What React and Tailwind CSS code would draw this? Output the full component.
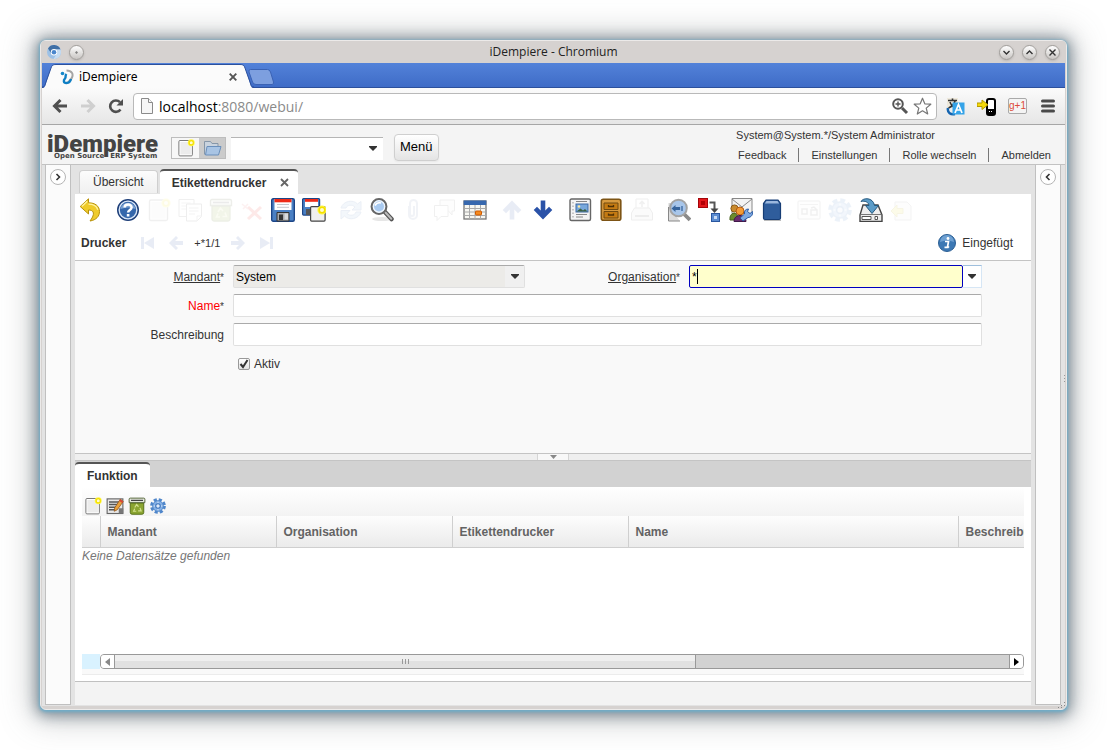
import { useState } from "react";

const ARIAL = "font-['Liberation_Sans',Arial,sans-serif]";

/* ---------- small helpers ---------- */

function Svg({ size = 24, children, className = "" }) {
  return (
    <svg width={size} height={size} viewBox="0 0 24 24" fill="none" className={`block shrink-0 ${className}`} aria-hidden="true">
      {children}
    </svg>
  );
}

function Caret() {
  return (
    <svg width="8" height="5" viewBox="0 0 8 5" className="block" aria-hidden="true">
      <path d="M0 0h8v1L4 5 0 1z" fill="#333" />
    </svg>
  );
}

/* ---------- toolbar icons ---------- */

const Undo = () => (
  <Svg>
    <path d="M9.500.8 1.200 8.500 9.500 16v-4c4.500 0 6.500 2.500 3.500 8l-2 3c6.500-1 9.500-5 9.500-9.500C20.500 8 16 4.800 9.500 4.800z" fill="#efcb2a" stroke="#b8920c" strokeLinejoin="round" />
    <path d="M8.200 3.300 3 8.300M9.500 6.200c4.500 0 8 1.800 9.300 5.500" stroke="#fff3a0" strokeWidth="1.300" />
  </Svg>
);
const Help = () => (
  <Svg>
    <circle cx="12" cy="12" r="10.300" fill="#3567ab" stroke="#1f3f78" strokeWidth="1.400" />
    <circle cx="12" cy="12" r="8.800" stroke="#dbe6f5" strokeWidth="1.300" />
    <path d="M4.500 11a7.600 7.600 0 0 1 15 0q-7-3-15 0z" fill="#7ba2d3" />
    <path d="M8.600 9.500C8.600 5.500 15.600 5.500 15.600 9.400c0 2.600-3.500 2.600-3.500 5.200" stroke="#fff" strokeWidth="2.500" />
    <rect x="10.800" y="16" width="2.600" height="2.500" fill="#fff" />
  </Svg>
);
const Sun = ({ x = 19, y = 5 }) => (
  <g>
    <circle cx={x} cy={y} r="4.600" fill="#fff64a" />
    <circle cx={x} cy={y} r="2.800" stroke="#f4e000" strokeWidth="1.600" fill="#fffbd0" />
  </g>
);
const NewDoc = ({ size }) => (
  <Svg size={size}>
    <rect x="2.500" y="2" width="18" height="20.500" rx="1.500" fill="#fff" stroke="#777" strokeWidth="1.300" />
    <rect x="4.500" y="4" width="14" height="16.500" fill="#ececec" />
    <Sun />
  </Svg>
);
const Copy = () => (
  <Svg>
    <path d="M1 1.500h15v17H1z" fill="#fff" stroke="#777" />
    <path d="M3.500 5h9M3.500 8h5M3.500 11h5" stroke="#aaa" />
    <path d="M8.500 6h15v12.500L19 23H8.500z" fill="#fff" stroke="#666" />
    <path d="M11 10h9.500M11 13h9.500M11 16h6M23.500 18H19v5" stroke="#999" />
  </Svg>
);
const Bin = ({ size }) => (
  <Svg size={size}>
    <path d="M3 8h18v12.500q0 2.500-2.500 2.500h-13Q3 23 3 20.500z" fill="#8ba531" stroke="#56701a" strokeWidth="1.300" />
    <path d="M1.500 3q0-1.500 1.500-1.500h18q1.500 0 1.500 1.500v4.500h-21z" fill="#e4e8dc" stroke="#55663a" strokeWidth="1.300" />
    <path d="M4 4.500h16" stroke="#444" strokeWidth="1.600" />
    <path d="m9 14 2.500-4 2.500 3M16 14.500l1.500 4h-4M11 19H7.500L9 15.500" stroke="#d3e08f" strokeWidth="1.600" />
  </Svg>
);
const Cross = () => (
  <Svg>
    <path d="m8 9 13 12M21 9 8 21" stroke="#f03028" strokeWidth="3" />
    <path d="m2 6 6 5M8 6l-5 5" stroke="#f08080" strokeWidth="1.500" />
  </Svg>
);
const Save = () => (
  <Svg>
    <rect x=".7" y=".7" width="22.600" height="22.600" rx="1.500" fill="#4a80c4" stroke="#1c4587" strokeWidth="1.400" />
    <rect x="3.500" y="1" width="17" height="11" fill="#fff" />
    <rect x="3.500" y="1" width="17" height="3.300" fill="#ee2b18" />
    <path d="M6 6.500h12M6 9.300h12" stroke="#c3c6cc" />
    <path d="M6 14.500h12V23H6z" fill="#a9abae" stroke="#333" />
    <path d="M8 16.500h4V22H8z" fill="#333" />
    <path d="M13.500 15.500h3.500v6h-3.500z" fill="#d8dadd" />
  </Svg>
);
const SaveNew = () => (
  <Svg>
    <rect x=".6" y=".6" width="17" height="16.500" rx="1" fill="#4a80c4" stroke="#1c4587" strokeWidth="1.200" />
    <rect x="3" y="1" width="13" height="8" fill="#fff" />
    <rect x="3" y="1" width="13" height="2.800" fill="#ee2b18" />
    <path d="M4 11h6v6H4z" fill="#555" />
    <rect x="8.600" y="8.600" width="14.500" height="14.500" rx="1" fill="#f0f0f0" stroke="#444" strokeWidth="1.200" />
    <Sun x="20" y="12" />
  </Svg>
);
const Refresh = () => (
  <Svg>
    <path d="M2 10C4 3 14 1 18.500 6L22 3.500v8.500h-9l3-3C13 6 8 7 7 10zM22 14c-2 7-12 9-16.500 4L2 21v-8.500h9l-3 3c3 3 8 2 9-1.500z" fill="#8fb4e0" stroke="#4470ae" />
  </Svg>
);
const Find = () => (
  <Svg>
    <ellipse cx="12" cy="21" rx="10" ry="2" fill="#e6e6e6" />
    <path d="m14.500 13.500 7 7.500" stroke="#555" strokeWidth="4.500" strokeLinecap="round" />
    <path d="m15 14 6.300 6.700" stroke="#bbb" strokeWidth="2" strokeLinecap="round" />
    <circle cx="9" cy="8.500" r="7.300" fill="#a9caf0" stroke="#666" strokeWidth="2.300" />
    <circle cx="9" cy="8.500" r="5.700" stroke="#eef5fd" strokeWidth="1.400" />
    <path d="M5 7.500Q7 4 11 5" stroke="#fff" strokeWidth="1.600" />
  </Svg>
);
const Clip = () => (
  <Svg>
    <path d="M8 8v9a4 4 0 0 0 8 0V5.500a3.500 3.500 0 0 0-7 0V16a2 2 0 0 0 4 0V8" stroke="#7f93b8" strokeWidth="2" />
  </Svg>
);
const Chat = () => (
  <Svg>
    <path d="M8 2h14.500v11H20v4l-3.500-4H8z" fill="#f5f5f5" stroke="#7a7a7a" />
    <path d="M2.500 7.500H16v11H9l-4 4v-4H2.500z" fill="#fff" stroke="#7a7a7a" />
  </Svg>
);
const Grid = () => (
  <Svg>
    <rect x="1" y="3" width="22" height="18" fill="#f7f7f2" stroke="#777" strokeWidth="1.300" />
    <rect x=".7" y="2.500" width="22.600" height="4.500" fill="#3768ae" />
    <path d="M1.500 10.500h21M1.500 14h21M1.500 17.500h21M6.500 7v14M12 7v14M17.500 7v14" stroke="#aaa" />
    <rect x="12.500" y="13" width="6" height="4" rx="1" fill="#f58a1f" stroke="#cf5a00" />
  </Svg>
);
const Arrow = ({ turn = "" }) => (
  <Svg className={turn}>
    <path d="M12 2.500 21.300 12 18 15.200l-3.700-3.600v9.900H9.700v-9.900L6 15.200 2.700 12z" fill="#2a52a8" />
  </Svg>
);
const Report = () => (
  <Svg>
    <rect x="2" y="1" width="20.500" height="21.500" rx="1.500" fill="#f4f4f4" stroke="#666" strokeWidth="1.400" />
    <path d="M5 4v16" stroke="#999" strokeDasharray="1.500 2" />
    <path d="M8 3.500h11M8 16.500h11M8 19h7" stroke="#888" />
    <rect x="8" y="6" width="12" height="8" fill="#78a8dc" stroke="#3c68a4" />
    <path d="m8.500 13.500 4-3 2.500 2 2-1.500 2.500 2.500z" fill="#3c6140" />
    <circle cx="11" cy="8.500" r="1.200" fill="#ffeaa0" />
  </Svg>
);
const Archive = () => (
  <Svg>
    <rect x="2.300" y="1.300" width="19.500" height="21" rx="2" fill="#d79a3f" stroke="#7d5415" strokeWidth="1.600" />
    <path d="M5 5h14v6.500H5zM5 13.500h14V20H5z" fill="#c47a12" stroke="#714a10" />
    <path d="M9.500 7v1.500h5V7M9.500 15.500V17h5v-1.500" stroke="#4f3005" strokeWidth="1.300" />
  </Svg>
);
const Print = () => (
  <Svg>
    <path d="M6 1h12v11H6z" fill="#fff" stroke="#777" />
    <path d="M12 9V4M9.500 6 12 3.500 14.500 6" stroke="#777" strokeWidth="1.600" />
    <path d="M4.500 10h15l3 5v7h-21v-7z" fill="#ddd" stroke="#666" />
    <path d="M5 18h14" stroke="#555" strokeWidth="2" />
  </Svg>
);
const ZoomAcross = () => (
  <Svg>
    <path d="M1.500 5H9v18H1.500z" fill="#d5d5d5" />
    <path d="M1.500 9v14H13" fill="#ddd" stroke="#888" />
    <path d="m17 16 6 6" stroke="#8a8a8a" strokeWidth="3.800" />
    <circle cx="11.500" cy="10" r="8.300" fill="#a8c6ea" stroke="#a3a3a3" strokeWidth="2" />
    <path d="m4.500 10.500 4-3.500v2h4v3h-4v2z" fill="#37659d" />
    <path d="M12.500 9v3M15 8v5" stroke="#37659d" strokeWidth="1.300" />
  </Svg>
);
const Workflow = () => (
  <Svg>
    <rect x=".5" y=".5" width="9" height="9" fill="#e3171b" stroke="#a3060a" />
    <rect x="3" y="3" width="4" height="4" fill="#b30005" />
    <path d="M11.500 4.500h5V11" stroke="#555" strokeWidth="2" />
    <path d="M12.500 10.500h8l-4 4.500z" fill="#444" />
    <rect x="13.500" y="15.500" width="8" height="8" fill="#5b8cd0" stroke="#2a57a0" />
    <rect x="16" y="18" width="3" height="3" fill="#c9dbf4" />
  </Svg>
);
const Request = () => (
  <Svg>
    <path d="M3 .5h20v15H3z" fill="#f3f3f3" stroke="#888" />
    <path d="m3 1 10 8L23 1" stroke="#888" />
    <circle cx="5.500" cy="10.500" r="3.600" fill="#c98b2e" stroke="#8b5a16" />
    <path d="M1 22c-1-9 9-9 8 0z" fill="#6b8a2d" stroke="#46601a" />
    <circle cx="11" cy="13" r="4" fill="#f39b35" stroke="#b25b12" />
    <path d="M5 23.500c0-8 12-8 12 0z" fill="#6a2d6e" stroke="#41184a" />
    <path d="m11 20 3 3 5-3.500c3 0 5-2.500 4.500-6L21 15.500l-2.500-2 1-2.500c-3 0-4.500 2-4 5z" fill="#7da8e2" stroke="#2c5ba3" />
  </Svg>
);
const Book = () => (
  <Svg>
    <path d="M3.500 20V5.500L6 2h12l2.500 3.500V20q0 1.500-1.500 1.500H5q-1.500 0-1.500-1.500z" fill="#2f5d9c" stroke="#173d75" strokeWidth="1.200" />
    <path d="M6.500 3h11l1.700 2.500H4.800z" fill="#9cb8de" />
    <path d="M4 22.500h17" stroke="#bbb" />
  </Svg>
);
const Process = () => (
  <Svg>
    <rect x="1" y="3" width="22" height="18" rx="1" fill="#fafafa" stroke="#888" />
    <path d="M3 6.500h18" stroke="#999" />
    <path d="M5 11h5v5H5zM14 12h6v5h-6zM14 10l3-1 3 3" stroke="#777" strokeWidth="1.500" />
  </Svg>
);
const Gear = ({ size }) => (
  <Svg size={size}>
    <circle cx="12" cy="12" r="9.600" stroke="#4f86ca" strokeWidth="4.400" strokeDasharray="4.600 2.940" />
    <circle cx="12" cy="12" r="8" fill="#84afe4" stroke="#4f86ca" strokeWidth="1.400" />
    <circle cx="12" cy="12" r="3.400" fill="#dfeafa" stroke="#3f77bd" strokeWidth="1.600" />
    <path d="M12 5.500v2M12 16.500v2M5.500 12h2M16.500 12h2" stroke="#dbe9fa" strokeWidth="1.500" />
  </Svg>
);
const Export = () => (
  <Svg>
    <path d="M4 7h15l4 10v6.500H1V17z" fill="#eee" stroke="#444" strokeWidth="1.400" />
    <path d="M1.500 16.500h21" stroke="#777" />
    <path d="M3 18.500h9v3H3zM16 18.500h2.500v3H16z" fill="#fff" stroke="#555" />
    <path d="M2 3.500C4-.5 14-1 15.500 7.500H19.500L13 15.500 6.500 7.500h3.500C9.500 4 6 2.500 2 3.500z" fill="#5b9cc8" stroke="#25597f" />
  </Svg>
);
const FileImport = () => (
  <Svg>
    <path d="M5 4h12l4 4v14H5z" fill="#eee" stroke="#999" />
    <path d="m1 13 6-6v3.500h6v5H7V19z" fill="#e8df30" stroke="#b5a80d" />
  </Svg>
);

const toolGroups = [
  [["Rückgängig", Undo]],
  [["Hilfe", Help], ["Neu", NewDoc, 1], ["Kopieren", Copy, 1], ["Löschen", Bin, 1], ["Auswahl löschen", Cross, 1], ["Speichern", Save], ["Speichern und neu", SaveNew]],
  [["Aktualisieren", Refresh, 1], ["Suchen", Find], ["Anhang", Clip, 1], ["Notiz", Chat, 1], ["Tabelle", Grid]],
  [["Übergeordnet", () => <Arrow />, 1], ["Detail", () => <Arrow turn="rotate-180" />]],
  [["Bericht", Report], ["Archiv", Archive], ["Drucken", Print, 1]],
  [["Zoom", ZoomAcross], ["Workflow", Workflow], ["Anfragen", Request], ["Produktinfo", Book]],
  [["Anpassen", Process, 1], ["Prozess", Gear, 1], ["Exportieren", Export], ["Importieren", FileImport, 1]],
];

/* ---------- browser chrome ---------- */

function RoundButton({ label, children }) {
  return (
    <button aria-label={label} className="grid size-[15px] place-items-center rounded-full border border-[#a19e9b] bg-linear-to-b from-white to-[#c9c6c3] shadow-sm">
      <svg width="9" height="9" viewBox="0 0 9 9" fill="none" stroke="#333" strokeWidth="1.400" aria-hidden="true">{children}</svg>
    </button>
  );
}

function TitleBar() {
  return (
    <div className="flex h-[22px] items-center rounded-t bg-[#d6d2d0] px-[6px]">
      <div className="flex flex-1 items-center gap-2">
        <svg width="14" height="14" viewBox="0 0 14 14" aria-hidden="true">
          <circle cx="7" cy="7" r="7" fill="#9dc1e6" />
          <path d="M1 3.500A7 7 0 0 1 13.500 4.500H7L4 8z" fill="#3f6fa6" />
          <path d="M13.500 4.500A7 7 0 0 1 6.500 14L10 8.500 9 4.500z" fill="#c5dcf2" />
          <circle cx="7" cy="7.200" r="3.200" fill="#fff" />
          <circle cx="7" cy="7.200" r="2.300" fill="#4a86cc" />
        </svg>
        <RoundButton label="Menü"><circle cx="4.500" cy="4.500" r=".3" /></RoundButton>
      </div>
      <h1 className="font-['Open_Sans',sans-serif] text-[12px] text-[#222]">iDempiere - Chromium</h1>
      <div className="flex flex-1 items-center justify-end gap-2">
        <RoundButton label="Minimieren"><path d="m1.500 3 3 3 3-3" /></RoundButton>
        <RoundButton label="Maximieren"><path d="m1.500 6 3-3 3 3" /></RoundButton>
        <RoundButton label="Schließen"><path d="m1.500 1.500 6 6M7.500 1.500l-6 6" /></RoundButton>
      </div>
    </div>
  );
}

function TabStrip() {
  return (
    <div className="flex h-[25px] items-end bg-linear-to-b from-[#5382d9] to-[#3e6bc6] shadow-[inset_0_-1px_#2c509c]">
      <svg width="14" height="24" viewBox="0 0 14 24" className="block" aria-hidden="true">
        <path d="M0 24c3 0 3-2 4-5L9 4c1-3 2-3.500 5-3.500V24z" fill="#fbfbfb" />
        <path d="M0 23c3 0 3-2 4-5L9 4c1-3 2-3.500 5-3.500" fill="none" stroke="#2c509c" />
      </svg>
      <div className="flex h-[24px] w-[184px] items-center border-t border-[#2c509c] bg-[#fbfbfb] pl-1">
        <svg width="14" height="16" viewBox="0 0 14 16" fill="none" aria-hidden="true">
          <circle cx="2.500" cy="4.500" r="1.800" fill="#1687c9" />
          <path d="M6.500 1.500C12 1.500 13.500 5 12 8.500S8 12.500 7 14.500" stroke="#a5a5a5" strokeWidth="2" />
          <path d="M6.500 5c-2 2 0 3-1.500 4.500S3 14 6.500 14s4-2 4.500-4" stroke="#0f7fc4" strokeWidth="2.400" />
        </svg>
        <span className="ml-[5px] flex-1 font-['Noto_Sans',sans-serif] text-[12px] text-black">iDempiere</span>
        <button aria-label="Tab schließen" className="py-1 pr-[3px]">
          <svg width="8" height="8" viewBox="0 0 8 8" aria-hidden="true"><path d="m.7.7 6.600 6.600M7.300.7.7 7.300" stroke="#555" strokeWidth="1.900" /></svg>
        </button>
      </div>
      <svg width="14" height="24" viewBox="0 0 14 24" className="block" aria-hidden="true">
        <path d="M14 24c-3 0-3-2-4-5L5 4C4 1 3 .5 0 .5V24z" fill="#fbfbfb" />
        <path d="M14 23c-3 0-3-2-4-5L5 4C4 1 3 .5 0 .5" fill="none" stroke="#2c509c" />
      </svg>
      <button aria-label="Neuer Tab" className="-ml-[6px] mb-[3px]">
        <svg width="27" height="16" viewBox="0 0 27 16" className="block" aria-hidden="true">
          <path d="M2.500.5h17q2 0 3 2.500l3 10q.5 2.500-1.500 2.500H8q-2.500 0-3.500-2.500L1 3Q.5.5 2.500.5z" fill="#7d9fdf" stroke="#3a62b4" />
        </svg>
      </button>
    </div>
  );
}

function AddressBar() {
  return (
    <div className="flex h-[36px] items-center bg-linear-to-b from-[#fbfbfb] to-[#e6e6e6] pr-[10px] pl-[10px]">
      <div className="flex gap-3 pr-[9px]">
        <button aria-label="Zurück">
          <svg width="16" height="16" viewBox="0 0 16 16" fill="none" stroke="#4f4f4f" strokeWidth="3" aria-hidden="true"><path d="M15 8H3M8.500 2 2.500 8l6 6" /></svg>
        </button>
        <button aria-label="Vorwärts">
          <svg width="16" height="16" viewBox="0 0 16 16" fill="none" stroke="#cfcfcf" strokeWidth="3" aria-hidden="true"><path d="M1 8h12M7.500 2l6 6-6 6" /></svg>
        </button>
        <button aria-label="Neu laden">
          <svg width="16" height="16" viewBox="0 0 16 16" fill="none" aria-hidden="true">
            <path d="M12.500 11.500a5.700 5.700 0 1 1-.5-7.300" stroke="#4f4f4f" strokeWidth="2.600" />
            <path d="M15 1v6.500H8.500z" fill="#4f4f4f" />
          </svg>
        </button>
      </div>
      <div className="flex h-[27px] min-w-0 flex-1 items-center rounded border border-[#b9b9b9] bg-white pr-1 pl-[5px]">
        <svg width="16" height="18" viewBox="0 0 16 18" fill="#f6f6f6" stroke="#8a8a8a" aria-hidden="true"><path d="M2.500 1.500h7l4 4v11h-11z" /><path d="M9.500 1.500v4h4" /></svg>
        <a href="#" className="ml-1 flex-1 truncate font-['Open_Sans',sans-serif] text-[14px] text-[#8a8a8a]"><span className="text-black">localhost</span>:8080/webui/</a>
        <svg width="18" height="18" viewBox="0 0 18 18" fill="none" stroke="#555" aria-hidden="true">
          <circle cx="7" cy="7" r="4.800" strokeWidth="2" /><path d="M4.500 7h5M7 4.500v5" strokeWidth="1.400" /><path d="m11 11 5 5" strokeWidth="3" />
        </svg>
        <svg width="19" height="19" viewBox="0 0 19 19" fill="#fff" stroke="#777" className="ml-1" aria-hidden="true">
          <path d="m9.500 1.200 2.300 5.600 6 .4-4.600 3.900 1.500 5.900-5.200-3.200L4.300 17l1.500-5.900L1.200 7.200l6-.4z" strokeWidth="1.200" strokeLinejoin="round" />
        </svg>
      </div>
      <div className="flex items-center gap-3 pl-[9px]">
        <button aria-label="Übersetzen">
          <svg width="19" height="19" viewBox="0 0 19 19" fill="none" aria-hidden="true">
            <path d="M1 1h11v10H1z" fill="#eee9dc" /><path d="M2 3.500h9M6.500 1.500v2M9 4c-1 4-4 6-6.500 7M4 5c1 3 3 5 6 6" stroke="#333" strokeWidth="1.600" />
            <path d="M2 11c-1 5 3 7 7 6" stroke="#1464b0" strokeWidth="2.500" />
            <rect x="6.500" y="5.500" width="12" height="12" fill="#35a3e8" />
            <path d="m9 16 3.500-8.500L16 16M10.500 13h4" stroke="#fff" strokeWidth="1.700" />
          </svg>
        </button>
        <button aria-label="An Telefon senden">
          <svg width="19" height="19" viewBox="0 0 19 19" fill="none" aria-hidden="true">
            <rect x="10" y="2" width="8" height="16" rx="2" fill="#fff" stroke="#000" strokeWidth="2" /><path d="M10 12h8v5h-8z" fill="#000" /><path d="M12 14.500h4" stroke="#fff" strokeDasharray="1 1" />
            <path d="M0 6h5V3l6 4.800L5 12.500v-3H0z" fill="#f5d90a" stroke="#b49a00" />
          </svg>
        </button>
        <button className="flex h-[16px] w-[19px] items-center justify-center rounded-xs border border-[#a9a9a9] bg-[#f4f4f4] font-['Liberation_Sans',Arial,sans-serif] text-[10px] leading-none text-[#dd4b39]">g+1</button>
        <button aria-label="Chromium anpassen" className="ml-[2px]">
          <svg width="14" height="14" viewBox="0 0 14 14" stroke="#4a4a4a" strokeWidth="3" strokeLinecap="round" aria-hidden="true"><path d="M1.500 2h11M1.500 7h11M1.500 12h11" /></svg>
        </button>
      </div>
    </div>
  );
}

/* ---------- iDempiere desktop ---------- */

const userLinks = ["Feedback", "Einstellungen", "Rolle wechseln", "Abmelden"];

function Header() {
  return (
    <header className="flex h-[41px] items-center border-y border-t-[#a6a6a6] border-b-[#c2c2c2] bg-[#f4f4f4] pl-[5px]">
      <div className="w-[124px] pt-[2px] text-[#444]">
        <div className="h-[20px] font-['Roboto',sans-serif] text-[24px] leading-[24px] font-black">iDempiere</div>
        <div className="flex h-2 gap-[6px] pl-[7px] font-['DejaVu_Sans',sans-serif] text-[7px] leading-[8px] font-bold whitespace-nowrap">
          <span>Open Source</span>
          <span>ERP System</span>
        </div>
      </div>
      <div className="mt-[7px] flex h-[22px] border border-[#bdbdbd]">
        <button aria-label="Neu" className="grid w-[27px] place-items-center bg-[#f7f7f7]"><NewDoc size={18} /></button>
        <button aria-label="Öffnen" className="grid w-[26px] place-items-center bg-[#cbcbcb]">
          <svg width="20" height="18" viewBox="0 0 20 18" fill="none" aria-hidden="true">
            <path d="M2.500 15.500v-13h6l1.500 2h6v4" fill="#c9d3de" stroke="#8697a9" /><path d="M5 7.500h14l-2.500 8.500h-13z" fill="#a8c4e4" stroke="#6a8fbb" />
          </svg>
        </button>
      </div>
      <div className="mt-[7px] ml-[5px] flex h-[23px] w-[152px] border-t border-[#b5b5b5] bg-white">
        <input aria-label="Suche" className="w-0 flex-1 px-1 text-[12px] outline-none" />
        <button aria-label="Suchliste öffnen" className="px-[6px]"><Caret /></button>
      </div>
      <button className="mt-[5px] ml-[11px] h-[27px] rounded border border-[#cfcfcf] bg-linear-to-b from-white to-[#e4e4e4] px-[5px] text-[13px] text-black shadow-xs">Menü</button>
      <div className="ml-auto pr-[2px] text-[11px] text-[#333]">
        <p className="h-[20px] leading-[20px]">System@System.*/System Administrator</p>
        <nav className="flex h-[20px] items-center divide-x divide-[#777] pl-[2px]">
          {userLinks.map((l) => (
            <a key={l} href="#" className="px-3 leading-[14px] first:pl-0">{l}</a>
          ))}
        </nav>
      </div>
    </header>
  );
}

function SidePanel({ label, d }) {
  return (
    <aside className="flex w-[26px] shrink-0 justify-center border border-t-0 border-[#c0c0c0] bg-[#fbfbfb] pt-1">
      <button aria-label={label} className="grid size-[16px] place-items-center rounded-full border border-[#b5b5b5] bg-white">
        <svg width="8" height="8" viewBox="0 0 8 8" fill="none" stroke="#333" strokeWidth="1.600" aria-hidden="true"><path d={d} /></svg>
      </button>
    </aside>
  );
}

function WindowTabs() {
  return (
    <div className="flex h-[29px] items-end bg-[#e3e3e3] pl-1">
      <button className="mb-px h-[23px] rounded-t border border-b-0 border-[#cfcfcf] bg-linear-to-b from-[#fcfcfc] to-[#f0f0f0] px-[13px] text-[12px] text-[#333]">Übersicht</button>
      <div className="ml-[2px] flex h-[25px] items-center rounded-t border-t-2 border-[#555] bg-white pr-[9px] pl-3 text-[12px] font-bold text-[#333]">
        Etikettendrucker
        <button aria-label="Schließen" className="ml-[14px]">
          <svg width="9" height="9" viewBox="0 0 9 9" aria-hidden="true"><path d="m1 1 7 7M8 1 1 8" stroke="#666" strokeWidth="1.800" /></svg>
        </button>
      </div>
    </div>
  );
}

function Toolbar() {
  return (
    <div className="flex h-[32px] items-center gap-[13px] bg-white pl-1">
      {toolGroups.map((group, i) => (
        <div key={i} className="flex gap-[7px]">
          {group.map(([label, Icon, off]) => (
            <button key={label} aria-label={label} disabled={!!off} className="disabled:opacity-10"><Icon /></button>
          ))}
        </div>
      ))}
    </div>
  );
}

function NavIcon({ label, d }) {
  return (
    <button aria-label={label} disabled className="opacity-10">
      <svg width="15" height="14" viewBox="0 0 15 14" fill="#2a52a8" className="block" aria-hidden="true"><path d={d} /></svg>
    </button>
  );
}

function StatusRow() {
  return (
    <div className="flex h-[35px] items-center border-b border-[#c4c4c4] bg-white pr-[18px] pl-[6px] text-[12px] text-[#333]">
      <strong>Drucker</strong>
      <div className="ml-[14px] flex items-center gap-[14px]">
        <NavIcon label="Erster" d="M1 1h3v12H1zM14 1v12L4 7z" />
        <NavIcon label="Vorheriger" d="M7 0 0 7l7 7 2-2-3-3h8V5H6l3-3z" />
        <div className="-mx-1 text-[11px]">+*1/1</div>
        <NavIcon label="Nächster" d="m8 0 7 7-7 7-2-2 3-3H1V5h8L6 2z" />
        <NavIcon label="Letzter" d="M11 1h3v12h-3zM1 1v12l10-6z" />
      </div>
      <div className="ml-auto flex items-center gap-[6px]">
        <svg width="18" height="18" viewBox="0 0 18 18" aria-hidden="true">
          <circle cx="9" cy="9" r="8.500" fill="#3c78b4" stroke="#2c5f94" />
          <path d="M2 8a7 7 0 0 1 14 0Q9 5 2 8z" fill="#6ea0d2" />
          <path d="M7 7.500h3.500L9.500 13h1.700M6.500 13.300h4" stroke="#fff" strokeWidth="1.700" fill="none" />
          <circle cx="10" cy="4.500" r="1.400" fill="#fff" />
        </svg>
        Eingefügt
      </div>
    </div>
  );
}

const fieldBox = "h-[23px] w-full rounded-xs border border-[#e0e0e0] border-t-[#aaa] bg-white px-[3px] text-[12px] text-black outline-none";

const Required = () => <span className="text-[10px] text-[#333]">*</span>;

function Form() {
  const [name, setName] = useState("");
  const [description, setDescription] = useState("");
  const [org, setOrg] = useState("*");
  const [active, setActive] = useState(true);

  return (
    <form className="grid flex-1 auto-rows-[23px] grid-cols-[158fr_292fr_164fr_293fr_49fr] content-start items-center gap-y-[6px] bg-[#f9f9f9] pt-1 text-[12px] text-[#333]">
      <label htmlFor="client" className="pr-[9px] text-right"><span className="underline">Mandant</span><Required /></label>
      <div className="relative">
        <select id="client" className="h-[23px] w-full appearance-none rounded-xs border border-[#e0e0e0] border-t-[#aaa] bg-[#ecebe8] px-[2px] text-[12px] text-black">
          <option>System</option>
        </select>
        <div className="pointer-events-none absolute top-px right-px grid h-[21px] w-[19px] place-items-center bg-[#f0f0f0]"><Caret /></div>
      </div>
      <label htmlFor="org" className="pr-[9px] text-right"><span className="underline">Organisation</span><Required /></label>
      <div className="relative flex">
        <input id="org" value={org} onChange={(e) => setOrg(e.target.value)} className="h-[23px] w-0 flex-1 rounded-xs border border-[#0000c0] bg-[#ffffcc] px-[2px] text-[12px] text-black outline-none" />
        <span className="absolute top-1 left-2 h-[15px] w-px bg-black" />
        <button type="button" aria-label="Organisation wählen" className="grid w-[19px] place-items-center border border-l-0 border-[#d6e6f5] border-t-[#9fbfdd] bg-white"><Caret /></button>
      </div>

      <label htmlFor="name" className="col-start-1 pr-[9px] text-right text-[#ff0000]">Name<Required /></label>
      <div className="col-span-3"><input id="name" value={name} onChange={(e) => setName(e.target.value)} className={fieldBox} /></div>

      <label htmlFor="description" className="col-start-1 pr-[9px] text-right">Beschreibung</label>
      <div className="col-span-3"><input id="description" value={description} onChange={(e) => setDescription(e.target.value)} className={fieldBox} /></div>

      <label className="col-start-2 flex items-center gap-1 pl-1">
        <span className="relative grid size-[13px] place-items-center">
          <input type="checkbox" checked={active} onChange={(e) => setActive(e.target.checked)} className="size-[12px] appearance-none rounded-xs border border-[#999] bg-linear-to-b from-white to-[#e2e2e2]" />
          {active && (
            <svg width="10" height="10" viewBox="0 0 10 10" fill="none" className="pointer-events-none absolute" aria-hidden="true"><path d="m1.500 5 2.500 3 4.500-7" stroke="#333" strokeWidth="2" /></svg>
          )}
        </span>
        Aktiv
      </label>
    </form>
  );
}

const Edit = () => (
  <Svg size={18}>
    <rect x="1.500" y="2.500" width="21" height="19.500" fill="#e8e8e8" stroke="#666" strokeWidth="1.500" />
    <path d="M4 6.500h14M4 10h11M4 13.500h9M4 17h8" stroke="#555" strokeWidth="2" />
    <path d="M17 15h6v7h-6z" fill="#777" />
    <path d="m19 3 4 3-8 11-4 2 .5-4.500z" fill="#e9a13b" stroke="#8d4d12" />
    <path d="m19 3 4 3-1.500 2-4-3z" fill="#d6453a" />
  </Svg>
);

const columns = [
  ["", "w-[18px]"],
  ["Mandant", "w-[176px]"],
  ["Organisation", "w-[176px]"],
  ["Etikettendrucker", "w-[176px]"],
  ["Name", "w-[330px]"],
  ["Beschreibung", "w-[330px]"],
];

function DetailPanel() {
  return (
    <section className="flex h-[221px] flex-col bg-white">
      <div className="flex h-[27px] items-end border-t border-[#c4c4c4] bg-[#d2d2d2]">
        <button className="h-[25px] rounded-t border-t-2 border-[#555] bg-white px-3 text-[12px] font-bold text-[#333]">Funktion</button>
      </div>
      <div className="flex flex-1 flex-col px-[7px]">
        <div className="flex h-[29px] items-center gap-1 bg-linear-to-b from-white to-[#f3f3f3] pt-2 pl-[2px]">
          <button aria-label="Neu"><NewDoc size={18} /></button>
          <button aria-label="Bearbeiten"><Edit /></button>
          <button aria-label="Löschen"><Bin size={18} /></button>
          <button aria-label="Prozess"><Gear size={16} /></button>
        </div>
        <div className="flex-1 overflow-hidden">
          <table className="w-[1206px] table-fixed text-left text-[12px]">
            <thead>
              <tr className="h-[31px] bg-linear-to-b from-[#fdfdfd] to-[#ebebeb] text-[#636363]">
                {columns.map(([label, width]) => (
                  <th key={label} className={`border-r border-b border-[#cfcfcf] pt-px pl-[7px] font-bold ${width}`}>{label}</th>
                ))}
              </tr>
            </thead>
            <tbody>
              <tr><td colSpan={6} className="h-[16px] leading-[16px] text-[#777] italic">Keine Datensätze gefunden</td></tr>
            </tbody>
          </table>
        </div>
        <div className="flex h-[15px]">
          <div className="w-[18px] bg-[#d9f2ff]" />
          <div className="flex flex-1 overflow-hidden rounded border border-[#999] bg-[#d2d2d2]">
            <button aria-label="Nach links" className="grid w-[14px] place-items-center border-r border-[#999] bg-white">
              <svg width="5" height="8" viewBox="0 0 5 8" aria-hidden="true"><path d="M5 0v8L0 4z" fill="#888" /></svg>
            </button>
            <div className="flex-1">
              <div className="flex h-full w-[65%] items-center justify-center gap-[2px] border-r border-[#999] bg-linear-to-b from-[#efefef] from-50% to-[#e1e1e1] to-50%">
                <i className="h-[5px] w-px bg-[#999]" />
                <i className="h-[5px] w-px bg-[#999]" />
                <i className="h-[5px] w-px bg-[#999]" />
              </div>
            </div>
            <button aria-label="Nach rechts" className="grid w-[14px] place-items-center border-l border-[#999] bg-white">
              <svg width="5" height="8" viewBox="0 0 5 8" aria-hidden="true"><path d="M0 0v8l5-4z" fill="#000" /></svg>
            </button>
          </div>
        </div>
        <div className="mb-[6px] h-[6px] border-b border-[#ececec] bg-[#f9f9f9]" />
      </div>
    </section>
  );
}

export default function App() {
  return (
    <div className={`flex min-h-screen bg-white p-10 ${ARIAL}`}>
      <div className="relative flex min-w-0 flex-1 flex-col rounded-md border border-[#eceae9] bg-[#d6d2d0] shadow-[0_1px_3px_1px_#6fadc9,0_2px_14px_4px_rgba(70,90,105,0.6),0_2px_32px_8px_rgba(100,105,110,0.35)]">
        <TitleBar />
        <div className="mx-px mb-[3px] flex flex-1 flex-col bg-[#e3e3e3]">
          <TabStrip />
          <AddressBar />
          <Header />
          <div className="flex flex-1 gap-1 pr-1 pb-px pl-[3px]">
            <SidePanel label="Menü einblenden" d="m2.500 1 3 3-3 3" />
            <main className="flex min-w-0 flex-1 flex-col">
              <WindowTabs />
              <Toolbar />
              <StatusRow />
              <Form />
              <div className="flex h-[7px] justify-center border-t border-[#c4c4c4] bg-[#efefef]">
                <button aria-label="Detail einklappen" className="grid w-8 place-items-center border-x border-[#d5d5d5] bg-[#f8f8f8]">
                  <svg width="7" height="4" viewBox="0 0 7 4" aria-hidden="true"><path d="M0 0h7L3.500 4z" fill="#888" /></svg>
                </button>
              </div>
              <DetailPanel />
              <footer className="h-[24px] border-t border-[#c0c0c0] bg-[#f3f3f3]" />
            </main>
            <SidePanel label="Hilfe einblenden" d="m5.500 1-3 3 3 3" />
          </div>
        </div>
        <svg width="3" height="8" viewBox="0 0 3 8" fill="#999" className="absolute top-1/2 right-0" aria-hidden="true">
          <path d="M1 0h1v1H1zM1 3h1v1H1zM1 6h1v1H1z" />
        </svg>
        <svg width="8" height="8" viewBox="0 0 8 8" fill="#888" className="absolute right-0 bottom-0" aria-hidden="true">
          <path d="M6 1h1v1H6zM6 4h1v1H6zM3 4h1v1H3zM0 6h1v1H0zM3 6h1v1H3z" />
        </svg>
      </div>
    </div>
  );
}
